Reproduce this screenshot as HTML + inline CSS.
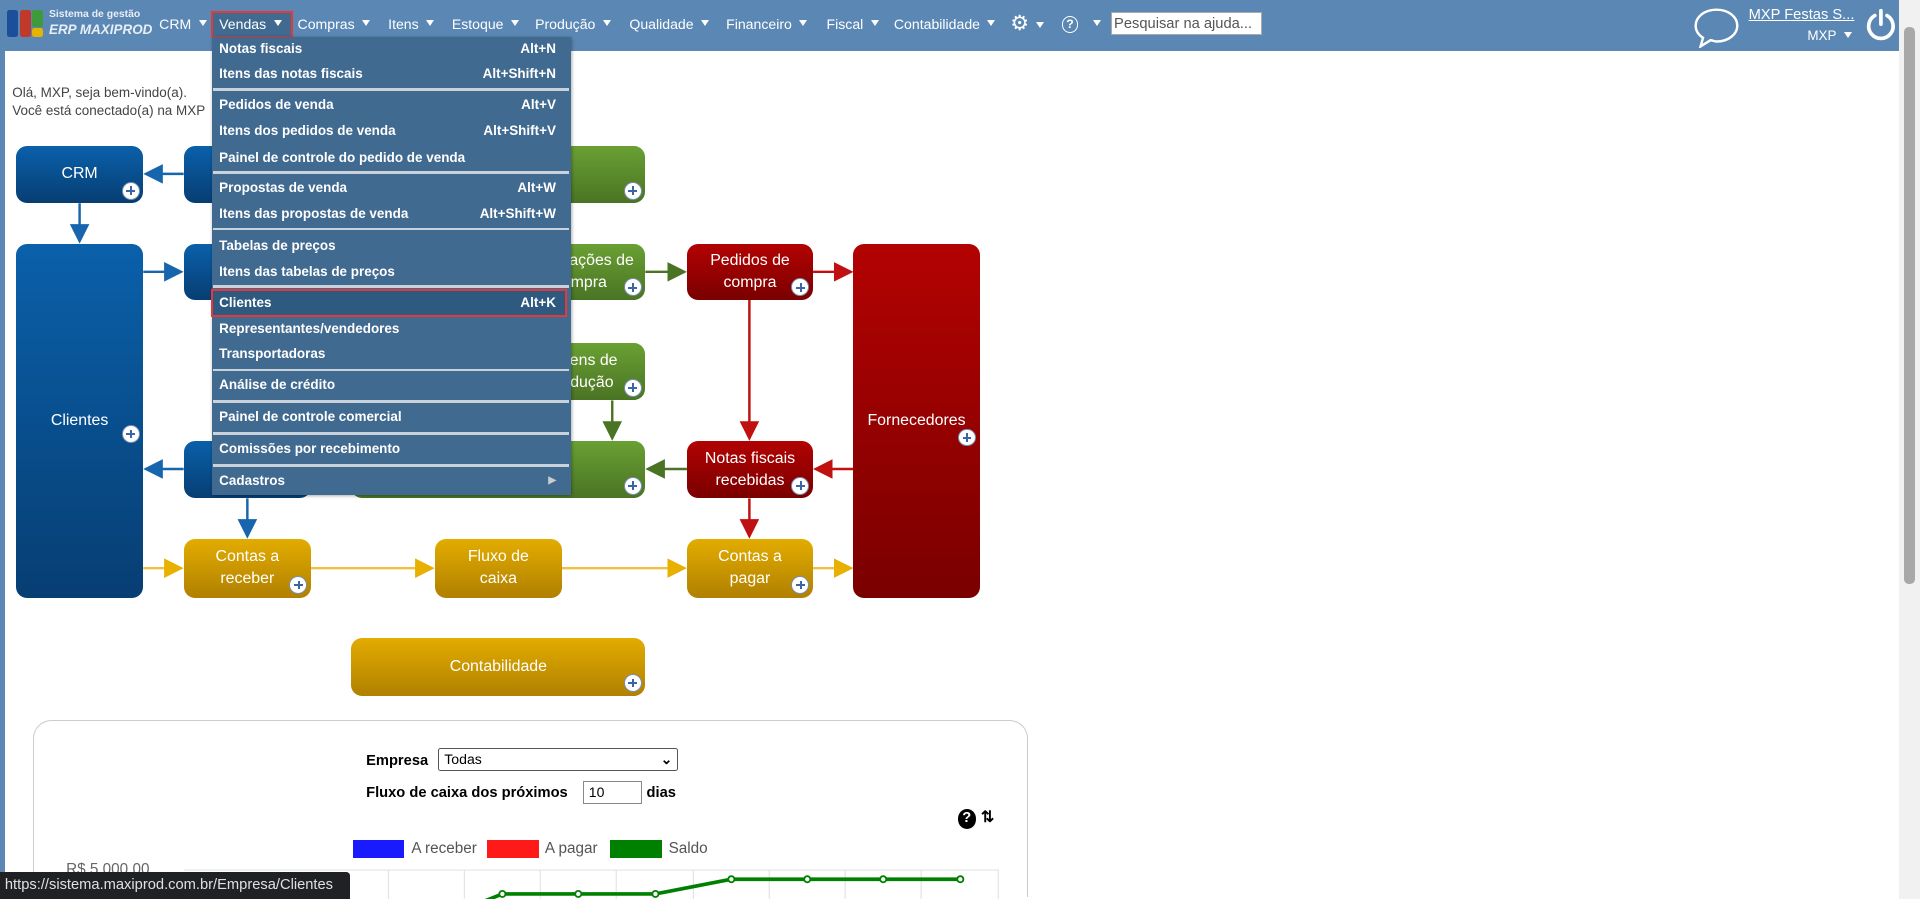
<!DOCTYPE html>
<html><head><meta charset="utf-8">
<style>
html,body{margin:0;padding:0;overflow:hidden;}
body{width:1920px;height:899px;background:#fff;}
#w{position:relative;width:1568px;height:734px;zoom:1.22449;font-family:"Liberation Sans",Arial,sans-serif;overflow:hidden;background:#fff;}
.a{position:absolute;}
#hdr{left:0;top:0;width:1568px;height:42px;background:#5b87b4;}
.nav{top:13px;color:#fff;font-size:11.5px;white-space:nowrap;}
.tri{display:inline-block;width:0;height:0;border-left:4px solid transparent;border-right:4px solid transparent;border-top:5px solid #fff;margin-left:6px;vertical-align:2px;}
#menu{left:173px;top:30px;width:293px;height:374px;background:#416a91;box-shadow:1px 1px 3px rgba(0,0,0,.4);}
.mi{position:absolute;left:6px;right:8px;color:#fff;font-size:11px;font-weight:bold;height:20px;line-height:20px;}
.mi span{position:absolute;right:4px;top:0;}
.sep{position:absolute;left:1px;right:1px;height:2px;background:#c9d2db;}
.box{position:absolute;border-radius:9px;color:#fff;font-size:13px;text-align:center;display:flex;align-items:center;justify-content:center;line-height:18px;}
.bl{background:linear-gradient(#0a60aa,#073e73);}
.gr{background:linear-gradient(#6aa033,#4a7424);}
.rd{background:linear-gradient(#b30202,#7a0000);}
.yl{background:linear-gradient(#e3ac00,#b08000);}
.pl{position:absolute;right:3px;bottom:3px;width:13px;height:13px;border-radius:50%;background:#fff;border:1px solid #7a8fb0;}
.pl:before{content:"";position:absolute;left:3px;top:6px;width:7px;height:1.6px;background:#3a66a8;}
.pl:after{content:"";position:absolute;left:6px;top:3px;width:1.6px;height:7px;background:#3a66a8;}
</style></head><body><div id="w">
<div id="hdr" class="a"></div>
<div class="a" style="left:6px;top:8px;width:9px;height:22px;background:#1c4f9a;border-radius:2px"></div>
<div class="a" style="left:16px;top:8px;width:9px;height:22px;background:#c0392b;border-radius:2px"></div>
<div class="a" style="left:26px;top:8px;width:9px;height:14px;background:#3f9a3a;border-radius:2px"></div>
<div class="a" style="left:26px;top:23px;width:9px;height:7px;background:#e6b400;border-radius:2px"></div>
<div class="a" style="left:40px;top:7px;color:#e8eef5;font-size:8.5px;font-weight:bold">Sistema de gestão</div>
<div class="a" style="left:40px;top:18px;color:#e8eef5;font-size:11px;font-weight:bold;font-style:italic">ERP MAXIPROD</div>
<div class="a nav" style="left:130px">CRM<i class="tri"></i></div>
<div class="a" style="left:172px;top:9px;width:64px;height:19px;border:2px solid #e53939;background:#416a91"></div>
<div class="a nav" style="left:179px">Vendas<i class="tri"></i></div>
<div class="a nav" style="left:243px">Compras<i class="tri"></i></div>
<div class="a nav" style="left:317px">Itens<i class="tri"></i></div>
<div class="a nav" style="left:369px">Estoque<i class="tri"></i></div>
<div class="a nav" style="left:437px">Produção<i class="tri"></i></div>
<div class="a nav" style="left:514px">Qualidade<i class="tri"></i></div>
<div class="a nav" style="left:593px">Financeiro<i class="tri"></i></div>
<div class="a nav" style="left:675px">Fiscal<i class="tri"></i></div>
<div class="a nav" style="left:730px">Contabilidade<i class="tri"></i></div>
<div class="a nav" style="left:825px;top:9px;font-size:17px">⚙<i class="tri"></i></div>
<div class="a" style="left:867px;top:13px;width:12px;height:12px;border:1.5px solid #fff;border-radius:50%;color:#fff;font-size:10px;text-align:center;line-height:12px;font-weight:bold">?</div>
<div class="a nav" style="left:887px"><i class="tri"></i></div>
<div class="a" style="left:907px;top:10px;width:124px;height:19px;background:#fff;border:1px solid #aaa;font-size:12px;color:#555;line-height:19px;padding-left:2px;box-sizing:border-box">Pesquisar na ajuda...</div>
<svg class="a" style="left:1382px;top:5px" width="40" height="34" viewBox="0 0 40 34"><path d="M20 3C10 3 3 9 3 16c0 5 3 8 6 10l-2 7 8-5c2 0 3 1 5 1 10 0 17-6 17-13S30 3 20 3z" fill="none" stroke="#fff" stroke-width="2"/></svg>
<div class="a" style="left:1428px;top:6px;color:#fff;font-size:12px;text-decoration:underline">MXP Festas S...</div>
<div class="a" style="left:1476px;top:23px;color:#fff;font-size:11px">MXP<i class="tri"></i></div>
<svg class="a" style="left:1523px;top:6px" width="26" height="28" viewBox="0 0 26 28"><path d="M8 7a10 10 0 1 0 10 0" fill="none" stroke="#fff" stroke-width="3" stroke-linecap="round"/><line x1="13" y1="3" x2="13" y2="14" stroke="#fff" stroke-width="3" stroke-linecap="round"/></svg>
<div class="a" style="left:1551px;top:0;width:17px;height:734px;background:#f1f1f1"></div>
<div class="a" style="left:1555px;top:22px;width:9px;height:455px;background:#a8a8a8;border-radius:4px"></div>
<div class="a" style="left:0;top:42px;width:4px;height:692px;background:#5b87b4"></div>

<div class="a" style="left:10px;top:69px;font-size:11px;color:#444;line-height:14px">Olá, MXP, seja bem-vindo(a).<br>Você está conectado(a) na MXP</div>

<svg class="a" style="left:0;top:0" width="900" height="600">
<defs>
<marker id="mb" markerWidth="8" markerHeight="8" refX="7" refY="4" orient="auto"><path d="M0,0L8,4L0,8z" fill="#1765ad"/></marker>
<marker id="mg" markerWidth="8" markerHeight="8" refX="7" refY="4" orient="auto"><path d="M0,0L8,4L0,8z" fill="#4a7424"/></marker>
<marker id="mr" markerWidth="8" markerHeight="8" refX="7" refY="4" orient="auto"><path d="M0,0L8,4L0,8z" fill="#c01010"/></marker>
<marker id="my" markerWidth="8" markerHeight="8" refX="7" refY="4" orient="auto"><path d="M0,0L8,4L0,8z" fill="#e8b000"/></marker>
</defs>
<g stroke-width="2" fill="none">
<line x1="65" y1="166" x2="65" y2="197" stroke="#1765ad" marker-end="url(#mb)"/>
<line x1="150" y1="142" x2="119" y2="142" stroke="#1765ad" marker-end="url(#mb)"/>
<line x1="117" y1="222" x2="148" y2="222" stroke="#1765ad" marker-end="url(#mb)"/>
<line x1="150" y1="383" x2="119" y2="383" stroke="#1765ad" marker-end="url(#mb)"/>
<line x1="202" y1="407" x2="202" y2="438" stroke="#1765ad" marker-end="url(#mb)"/>
<line x1="117" y1="464" x2="148" y2="464" stroke="#f0c040" marker-end="url(#my)"/>
<line x1="254" y1="464" x2="353" y2="464" stroke="#f0c040" marker-end="url(#my)"/>
<line x1="459" y1="464" x2="559" y2="464" stroke="#f0c040" marker-end="url(#my)"/>
<line x1="664" y1="464" x2="695" y2="464" stroke="#f0c040" marker-end="url(#my)"/>
<line x1="527" y1="222" x2="559" y2="222" stroke="#4a7424" marker-end="url(#mg)"/>
<line x1="500" y1="327" x2="500" y2="358" stroke="#4a7424" marker-end="url(#mg)"/>
<line x1="561" y1="383" x2="529" y2="383" stroke="#4a7424" marker-end="url(#mg)"/>
<line x1="664" y1="222" x2="695" y2="222" stroke="#c01010" marker-end="url(#mr)"/>
<line x1="612" y1="245" x2="612" y2="358" stroke="#c01010" marker-end="url(#mr)"/>
<line x1="697" y1="383" x2="666" y2="383" stroke="#c01010" marker-end="url(#mr)"/>
<line x1="612" y1="407" x2="612" y2="438" stroke="#c01010" marker-end="url(#mr)"/>
</g></svg>

<div class="box bl" style="left:13px;top:119px;width:104px;height:47px">CRM<i class="pl"></i></div>
<div class="box bl" style="left:150px;top:119px;width:104px;height:47px">Pedidos</div>
<div class="box gr" style="left:355px;top:119px;width:172px;height:47px"><i class="pl"></i></div>
<div class="box bl" style="left:13px;top:199px;width:104px;height:289px">Clientes<i class="pl" style="bottom:auto;top:148px"></i></div>
<div class="box bl" style="left:150px;top:199px;width:104px;height:46px">Propostas</div>
<div class="box gr" style="left:355px;top:199px;width:172px;height:46px;padding-left:66px;box-sizing:border-box">Solicitações de<br>compra<i class="pl"></i></div>
<div class="box rd" style="left:561px;top:199px;width:103px;height:46px">Pedidos de<br>compra<i class="pl"></i></div>
<div class="box rd" style="left:697px;top:199px;width:103px;height:289px">Fornecedores<i class="pl" style="bottom:auto;top:151px"></i></div>
<div class="box gr" style="left:355px;top:280px;width:172px;height:47px;padding-left:66px;box-sizing:border-box">Ordens de<br>produção<i class="pl"></i></div>
<div class="box bl" style="left:150px;top:360px;width:104px;height:47px"></div>
<div class="box gr" style="left:287px;top:360px;width:240px;height:47px"><i class="pl"></i></div>
<div class="box rd" style="left:561px;top:360px;width:103px;height:47px">Notas fiscais<br>recebidas<i class="pl"></i></div>
<div class="box yl" style="left:150px;top:440px;width:104px;height:48px">Contas a<br>receber<i class="pl"></i></div>
<div class="box yl" style="left:355px;top:440px;width:104px;height:48px">Fluxo de<br>caixa</div>
<div class="box yl" style="left:561px;top:440px;width:103px;height:48px">Contas a<br>pagar<i class="pl"></i></div>
<div class="box yl" style="left:287px;top:521px;width:240px;height:47px">Contabilidade<i class="pl"></i></div>

<div id="menu" class="a">
<div class="mi" style="top:0">Notas fiscais<span>Alt+N</span></div>
<div class="mi" style="top:21px">Itens das notas fiscais<span>Alt+Shift+N</span></div>
<div class="sep" style="top:42px"></div>
<div class="mi" style="top:46px">Pedidos de venda<span>Alt+V</span></div>
<div class="mi" style="top:67px">Itens dos pedidos de venda<span>Alt+Shift+V</span></div>
<div class="mi" style="top:89px">Painel de controle do pedido de venda</div>
<div class="sep" style="top:110px"></div>
<div class="mi" style="top:114px">Propostas de venda<span>Alt+W</span></div>
<div class="mi" style="top:135px">Itens das propostas de venda<span>Alt+Shift+W</span></div>
<div class="sep" style="top:156px"></div>
<div class="mi" style="top:161px">Tabelas de preços</div>
<div class="mi" style="top:182px">Itens das tabelas de preços</div>
<div class="sep" style="top:203px"></div>
<div class="a" style="left:-1px;top:206px;width:291px;height:23px;border:2px solid #e53939;background:#2f5a80;box-sizing:border-box"></div>
<div class="mi" style="top:208px">Clientes<span>Alt+K</span></div>
<div class="mi" style="top:229px">Representantes/vendedores</div>
<div class="mi" style="top:249px">Transportadoras</div>
<div class="sep" style="top:271px"></div>
<div class="mi" style="top:275px">Análise de crédito</div>
<div class="sep" style="top:297px"></div>
<div class="mi" style="top:301px">Painel de controle comercial</div>
<div class="sep" style="top:323px"></div>
<div class="mi" style="top:327px">Comissões por recebimento</div>
<div class="sep" style="top:349px"></div>
<div class="mi" style="top:353px">Cadastros<span style="font-size:8px;color:#ccc">▶</span></div>
</div>

<div class="a" style="left:27px;top:588px;width:811px;height:144px;border:1px solid #ccc;border-bottom:none;border-radius:15px 15px 0 0"></div>
<div class="a" style="left:299px;top:615px;font-size:12px;font-weight:bold">Empresa</div>
<div class="a" style="left:358px;top:611px;width:196px;height:19px;border:1px solid #555;border-radius:2px;box-sizing:border-box;font-size:11.5px;line-height:17px;padding-left:4px">Todas<span style="position:absolute;right:4px;font-weight:bold">⌄</span></div>
<div class="a" style="left:299px;top:641px;font-size:12px;font-weight:bold">Fluxo de caixa dos próximos</div>
<div class="a" style="left:476px;top:638px;width:48px;height:19px;border:1px solid #888;box-sizing:border-box;font-size:11.5px;line-height:17px;padding-left:4px">10</div>
<div class="a" style="left:528px;top:641px;font-size:12px;font-weight:bold">dias</div>
<div class="a" style="left:782px;top:661px;width:15px;height:16px;border-radius:50%;background:#000;color:#fff;font-size:12px;font-weight:bold;text-align:center;line-height:16px">?</div>
<div class="a" style="left:801px;top:659px;font-size:13px;font-weight:bold">⇅</div>
<div class="a" style="left:288px;top:686px;width:42px;height:15px;background:#1a1aff"></div>
<div class="a" style="left:336px;top:686px;font-size:12.5px;color:#555">A receber</div>
<div class="a" style="left:398px;top:686px;width:42px;height:15px;background:#ff1a1a"></div>
<div class="a" style="left:445px;top:686px;font-size:12.5px;color:#555">A pagar</div>
<div class="a" style="left:498px;top:686px;width:43px;height:15px;background:#008000"></div>
<div class="a" style="left:546px;top:686px;font-size:12.5px;color:#555">Saldo</div>
<div class="a" style="left:54px;top:703px;font-size:12.5px;color:#666">R$ 5.000,00</div>
<svg class="a" style="left:150px;top:708px" width="680" height="26">
<g stroke="#e4e4e4" stroke-width="1"><line x1="0" y1="2.5" x2="665" y2="2.5"/>
<line x1="167" y1="2" x2="167" y2="26"/><line x1="229" y1="2" x2="229" y2="26"/><line x1="291" y1="2" x2="291" y2="26"/><line x1="353" y1="2" x2="353" y2="26"/><line x1="416" y1="2" x2="416" y2="26"/><line x1="478" y1="2" x2="478" y2="26"/><line x1="540" y1="2" x2="540" y2="26"/><line x1="602" y1="2" x2="602" y2="26"/><line x1="665" y1="2" x2="665" y2="26"/></g>
<polyline points="245,28 260,22 322,22 385,22 447,10 509,10 571,10 634,10" fill="none" stroke="#008000" stroke-width="3"/>
<g fill="#fff" stroke="#008000" stroke-width="1.5"><circle cx="260" cy="22" r="2.5"/><circle cx="322" cy="22" r="2.5"/><circle cx="385" cy="22" r="2.5"/><circle cx="447" cy="10" r="2.5"/><circle cx="509" cy="10" r="2.5"/><circle cx="571" cy="10" r="2.5"/><circle cx="634" cy="10" r="2.5"/></g>
</svg>
<div class="a" style="left:0;top:712px;width:286px;height:22px;background:#202124;border-top-right-radius:3px;color:#e0e0e0;font-size:12px;line-height:22px;padding-left:4px;box-sizing:border-box">https://sistema.maxiprod.com.br/Empresa/Clientes</div>
</div></body></html>
